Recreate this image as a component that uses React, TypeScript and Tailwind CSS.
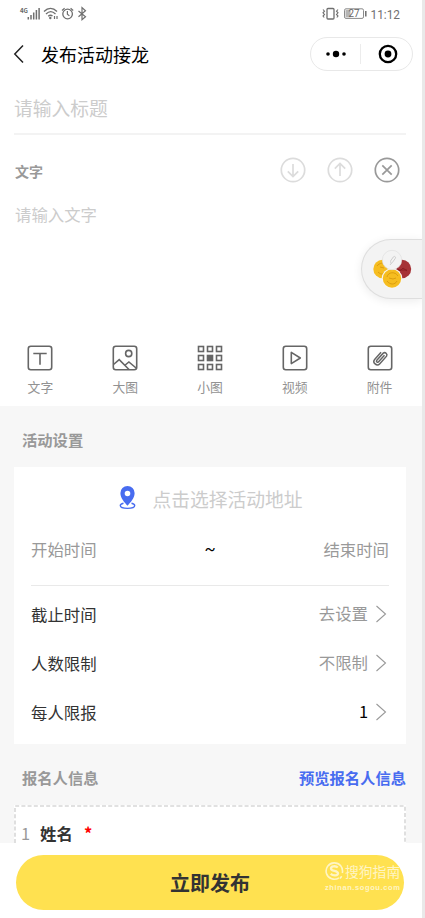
import React from 'react';

const box = { fill: 'none', stroke: '#666666', strokeWidth: 1.6 } as const;

function StatusBar() {
  return (
    <div className="flex h-7 items-center justify-between pl-[19px] pr-[19px] text-[#6b6b6b]">
      <svg width="70" height="20" viewBox="19 4 70 20" fill="none" stroke="#6f6f6f">
        <text x="20" y="13" fontSize="6.5" fontWeight="700" fill="#666" stroke="none" textLength="8" lengthAdjust="spacingAndGlyphs">4G</text>
        <path d="M28.3 17v2.5M31 15v4.5M33.7 12.5v7M36.4 10v9.5M39.1 8v11.5" strokeWidth="1.5" />
        <path d="M44 11.500c4-4 9-4 13 0M46 14c3-3 6.500-3 9.500 0M48.200 16.300c1.500-1.400 3-1.400 4.300-.2" strokeWidth="1.300" />
        <circle cx="50.300" cy="18" r="1.200" fill="#6f6f6f" stroke="none" />
        <path d="M54.500 16v3M57 16v3" strokeWidth="1.200" />
        <circle cx="67.600" cy="14" r="4.800" strokeWidth="1.300" />
        <path d="M62 10.500l2.600-2.300M73.200 10.500l-2.600-2.300M67.400 11v3.200l2 1.700" strokeWidth="1.200" />
        <path d="M78.500 11l7 5.800-3.500 3V7.600l3.500 3.200-7 6" strokeWidth="1.200" />
      </svg>
      <svg width="82" height="20" viewBox="321 4 82 20" fill="none" stroke="#6f6f6f">
        <rect x="327" y="8.500" width="7" height="10.500" rx="1" strokeWidth="1.300" />
        <path d="M323 9.500l1.500 1.700-1.500 1.600 1.500 1.600-1.500 1.600 1.200 1.500M338 9.500l-1.500 1.700 1.500 1.600-1.500 1.600 1.500 1.600-1.200 1.500" strokeWidth="1.100" />
        <rect x="344.500" y="8.800" width="19" height="9.600" rx="1.500" strokeWidth="1" stroke="#8a8a8a" />
        <rect x="345.500" y="9.800" width="5" height="7.600" fill="#b5b5b5" stroke="none" />
        <path d="M365.800 11v5.500" strokeWidth="1.500" />
        <text x="348.500" y="17.200" fontSize="10" fill="#666" stroke="none" fontFamily="Roboto" textLength="11" lengthAdjust="spacingAndGlyphs">27</text>
        <text x="370.500" y="18.600" fontSize="13.300" fill="#707070" stroke="none" fontFamily="Roboto" textLength="29.500" lengthAdjust="spacingAndGlyphs">11:12</text>
      </svg>
    </div>
  );
}

function NavBar() {
  return (
    <div className="flex h-[52px] items-center pl-3 pr-[9px]">
      <svg width="14" height="20" viewBox="0 0 14 20" fill="none" stroke="#222" strokeWidth="1.500">
        <path d="M11 1.500L2.800 10l8.200 8.500" />
      </svg>
      <h1 className="ml-[15px] text-[18px] leading-[26px] text-black">发布活动接龙</h1>
      <div className="ml-auto flex h-[34px] w-[103px] items-center rounded-full border border-[#e8e8e8]">
        <div className="flex flex-1 justify-center">
          <svg width="22" height="8" viewBox="0 0 22 8">
            <circle cx="3" cy="4" r="1.800" />
            <circle cx="11" cy="4" r="3.200" />
            <circle cx="19" cy="4" r="1.800" />
          </svg>
        </div>
        <div className="h-5 w-px bg-[#ececec]" />
        <div className="flex flex-1 justify-center pl-0.5">
          <svg width="20" height="20" viewBox="0 0 20 20">
            <circle cx="10" cy="10" r="8.200" fill="none" stroke="#000" strokeWidth="2.300" />
            <circle cx="10" cy="10" r="3.400" />
          </svg>
        </div>
      </div>
    </div>
  );
}

function RoundIcon({ d, color }: { d: string; color: string }) {
  return (
    <svg width="26" height="26" viewBox="0 0 26 26" fill="none" stroke={color} strokeWidth="1.700">
      <circle cx="13" cy="13" r="11.700" />
      <path d={d} />
    </svg>
  );
}

function CoinButton() {
  return (
    <div className="absolute right-0 top-[239px] flex h-[60px] w-[61px] items-center rounded-l-full border border-r-0 border-[#dedede] bg-[#f3f3f3] pl-[10px] shadow-[0_2px_10px_rgba(0,0,0,0.08)]">
      <svg className="shrink-0" width="42" height="42" viewBox="372 248 42 42">
        <circle cx="382.500" cy="269" r="9.200" fill="#f6bd20" />
        <path d="M377 266c2-3 7-4 10-1M378 272c3 3 7 3 9 0M380 267l4 1" fill="none" stroke="#dc9d12" />
        <circle cx="402" cy="269" r="9.200" fill="#a63236" />
        <path d="M396 270h11M397 268l3 3 3-3 4 3" fill="none" stroke="#8c1c22" />
        <circle cx="392" cy="278.500" r="10.300" fill="#f6f6f6" />
        <circle cx="392" cy="278.500" r="9.200" fill="#f6bd20" />
        <path d="M387 277c1-5 8-6 11-1M387 281c3 4 8 4 10 0M389 278l4 1 3-1" fill="none" stroke="#db9d10" />
        <circle cx="392" cy="260" r="9.700" fill="#f3f3f3" stroke="#e0e0e0" strokeWidth=".7" />
        <path d="M390.500 261l2.800-4c1-1.400 3 0 2 1.400l-3 4.200c-.7 1-2.300 0-1.700-1zM390 265l1.500-2" fill="none" stroke="#c4c4c4" strokeWidth=".8" />
      </svg>
    </div>
  );
}

const frame = <rect x="1.300" y="1.300" width="23.400" height="23.400" rx="2.500" />;

const tools: { label: string; icon: React.ReactNode }[] = [
  { label: '文字', icon: <>{frame}<path d="M6.300 8.500h13.400M13 8.500v11.300" /></> },
  {
    label: '大图',
    icon: <>{frame}<circle cx="16.700" cy="8.500" r="3.100" /><path d="M1.500 19.500l5.700-4.800L17 24.500M13.200 20l3.700-3 7.800 6.500" /></>,
  },
  {
    label: '小图',
    icon: (
      <>
        {[1.5, 10.5, 19.5].map((y) =>
          [1.5, 10.5, 19.5].map((x) => (
            <rect key={`${x}-${y}`} x={x} y={y} width="5" height="5" fill={x === 10.5 && y === 10.5 ? '#666' : 'none'} />
          )),
        )}
      </>
    ),
  },
  { label: '视频', icon: <>{frame}<path d="M9.300 7.400v11.200l9-5.600z" strokeLinejoin="round" /></> },
  {
    label: '附件',
    icon: (
      <>
        {frame}
        <g transform="translate(13.500 12.800) rotate(42) translate(-13 -13)" strokeWidth="1.500">
          <path d="M9.700 8.500v9.300a3.300 3.300 0 0 0 6.700 0V7.700a2.300 2.300 0 0 0-4.500 0v9.600a1.200 1.200 0 0 0 2.400 0V8.500" />
        </g>
      </>
    ),
  },
];

function Toolbar() {
  return (
    <div className="flex pb-[9px]">
      {tools.map((t) => (
        <div key={t.label} className="flex w-[84.800px] shrink-0 flex-col items-center pr-[4px]">
          <svg width="26" height="26" viewBox="0 0 26 26" {...box}>{t.icon}</svg>
          <span className="mt-[6px] text-[12.800px] leading-[20px] text-[#929292]">{t.label}</span>
        </div>
      ))}
    </div>
  );
}

function Chevron() {
  return (
    <svg className="ml-[7px]" width="12" height="18" viewBox="0 0 12 18" fill="none" stroke="#999" strokeWidth="1.100">
      <path d="M1.500 1l9 8-9 8" />
    </svg>
  );
}

function SettingRow({ label, value, dark }: { label: string; value: string; dark?: boolean }) {
  return (
    <div className="flex h-[49px] items-center pr-[2px] text-[16.400px] leading-6">
      <span className="text-[#333]">{label}</span>
      <span className={`ml-auto pb-[2px] ${dark ? 'text-black' : 'text-[#999]'}`}>{value}</span>
      <Chevron />
    </div>
  );
}

export default function App() {
  return (
    <div className="relative flex h-[918px] w-[425px] flex-col overflow-hidden border-r-[3px] border-[#e9e9e9] bg-[#f7f7f7] font-['Noto_Sans_CJK_SC',sans-serif]">
      <div className="flex h-[406px] shrink-0 flex-col bg-white">
        <StatusBar />
        <NavBar />
        <div className="ml-[14px] mr-4 flex h-[55px] items-center border-b-2 border-[#f3f3f3] pt-[2px] text-[18.800px] leading-7 text-[#ccc]">
          请输入标题
        </div>
        <div className="mt-[21px] flex h-[29px] items-center justify-between pl-[15px] pr-[22px]">
          <h2 className="text-[14px] font-bold leading-5 text-[#999]">文字</h2>
          <div className="flex gap-[21px] pb-px">
            <RoundIcon color="#dcdcdc" d="M13 7v12.500M7.800 14.300l5.200 5.200 5.200-5.200" />
            <RoundIcon color="#dcdcdc" d="M13 19V6.500M7.800 11.700L13 6.500l5.200 5.200" />
            <RoundIcon color="#999" d="M8.300 8.300l9.400 9.400M17.700 8.300l-9.400 9.400" />
          </div>
        </div>
        <p className="mt-[17px] pl-[15px] text-[16.400px] leading-6 text-[#ccc]">请输入文字</p>
        <div className="mt-auto">
          <Toolbar />
        </div>
      </div>

      <h2 className="mt-[21px] pl-[22px] text-[15.300px] font-bold leading-6 text-[#999]">活动设置</h2>
      <div className="ml-[14px] mr-4 mt-4 flex h-[277px] shrink-0 flex-col bg-white px-[17px]">
        <div className="mt-[18px] flex h-7 items-center justify-center pl-[2px] text-[18.800px] leading-7 text-[#ccc]">
          <svg className="mb-[2px] mr-4" width="17" height="24" viewBox="0 0 17 24">
            <path d="M4.500 17.200C2.600 17.700 1.300 18.500 1.300 19.600c0 1.700 3.200 2.800 7.200 2.800s7.200-1.100 7.200-2.800c0-1.100-1.300-1.900-3.200-2.400" fill="none" stroke="#486cf0" strokeWidth="1.400" />
            <path fillRule="evenodd" d="M8.500 0a7.100 7.100 0 0 0-7.100 7.200c0 4.800 4.100 9.300 7.100 12.500 3-3.200 7.100-7.700 7.100-12.500A7.100 7.100 0 0 0 8.500 0zm0 4.700a2.800 2.800 0 1 1 0 5.600 2.800 2.800 0 0 1 0-5.600z" fill="#486cf0" />
          </svg>
          点击选择活动地址
        </div>
        <div className="mt-[23px] flex h-[26px] items-center justify-between text-[16.400px] leading-6 text-[#999]">
          <span>开始时间</span>
          <span className="pt-[2px] font-['Roboto',sans-serif] text-black">~</span>
          <span>结束时间</span>
        </div>
        <div className="mb-[3px] mt-[23px] border-b border-[#e9e9e9]" />
        <SettingRow label="截止时间" value="去设置" />
        <SettingRow label="人数限制" value="不限制" />
        <SettingRow label="每人限报" value="1" dark />
      </div>

      <div className="mt-[21px] flex items-center justify-between pl-[22px] pr-4 text-[15.300px] font-bold leading-6">
        <h2 className="text-[#999]">报名人信息</h2>
        <span className="text-[#486cf0]">预览报名人信息</span>
      </div>
      <div className="relative ml-[14px] mr-4 mt-4 flex h-[38px] shrink-0 bg-white pl-[7px] pt-[16px] text-[16.400px] leading-6">
        <svg className="absolute left-0 top-0" width="392" height="38" viewBox="0 0 392 38" fill="none" stroke="#d8d8d8" strokeWidth="1.600" strokeDasharray="4 2.200">
          <path d="M1 38V1h390v37" />
        </svg>
        <span className="text-[#999]">1</span>
        <span className="ml-[10px] font-bold text-[#333]">姓名</span>
        <span className="ml-[11px] font-bold text-[#f00]">*</span>
      </div>
      <div className="relative h-[75px] shrink-0 bg-white pl-4 pr-[18px] pt-3">
        <button className="flex h-[55px] w-full items-center justify-center rounded-full bg-[#ffe150] text-[20px] font-bold leading-7 text-[#333]">
          立即发布
        </button>
        <div className="absolute right-[21px] top-[18px] flex w-[76px] flex-col whitespace-nowrap">
          <div className="flex items-center text-[13.800px] leading-5 text-[#fff5c5]">
            <svg className="mr-px shrink-0" width="19" height="20" viewBox="0 0 19 20" fill="none" stroke="#fff5c5">
              <path d="M14 16.800A8.200 8.200 0 1 1 17.300 12M15 17.500l1.700-2.200" strokeWidth="1.600" />
              <path d="M12.800 6.500C10.500 4.500 6 5 6 7.400c0 3.200 7 1.600 7 4.900 0 2.500-4.700 2.800-7.300.6" strokeWidth="2.300" />
            </svg>
            搜狗指南
          </div>
          <span className="mt-0.5 font-['Liberation_Sans',sans-serif] text-[7.500px] font-bold leading-[10px] tracking-[0.600px] text-[#fff5c5]">zhinan.sogou.com</span>
        </div>
      </div>
      <CoinButton />
    </div>
  );
}
